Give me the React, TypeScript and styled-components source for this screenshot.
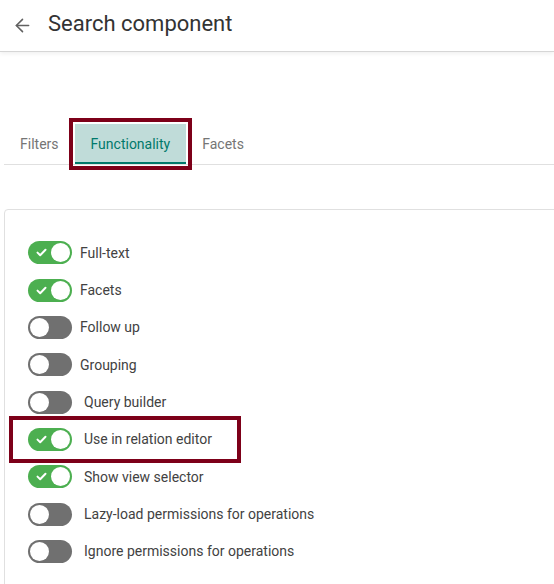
import React from 'react'
import styled, { createGlobalStyle } from 'styled-components'
import { ArrowLeft } from 'lucide-react'

const Global = createGlobalStyle`
  html, body {
    margin: 0;
    padding: 0;
    background: #fff;
    overflow: hidden;
  }
  body {
    font-family: Roboto, 'Liberation Sans', sans-serif;
    color: #424242;
  }
`

const Page = styled.div`
  width: 554px;
  height: 584px;
  overflow: hidden;
`

const Header = styled.header`
  height: 52px;
  display: flex;
  align-items: center;
  gap: 15px;
  padding-left: 12px;
  box-sizing: border-box;
  border-bottom: 1px solid #d6d6d6;
  box-shadow: 0 2px 4px rgba(0, 0, 0, 0.06);

  svg {
    color: #616161;
  }
`

const Title = styled.h1`
  margin: 0 0 5px;
  font-size: 22px;
  font-weight: 400;
  color: #333;
`

const TabBar = styled.nav`
  margin: 72px 0 0 4px;
  display: flex;
  border-bottom: 1px solid #e0e0e0;
`

const Tab = styled.button<{ $active?: boolean }>`
  height: 40px;
  padding: 2px 16px 0;
  border: none;
  font-family: inherit;
  font-size: 14px;
  cursor: pointer;
  color: ${p => (p.$active ? '#00796b' : '#757575')};
  background: ${p => (p.$active ? '#c0dcd9' : 'transparent')};
  border-bottom: 2px solid ${p => (p.$active ? '#00796b' : 'transparent')};
  outline: ${p => (p.$active ? '4px solid #7d0019' : 'none')};
  outline-offset: 2px;
`

const Card = styled.section`
  margin: 44px 0 0 4px;
  width: 620px;
  height: 420px;
  border: 1px solid #e0e0e0;
  border-radius: 4px;
  padding: 24px 0 0 23px;
`

const Row = styled.label<{ $marked?: boolean }>`
  height: 37.35px;
  display: flex;
  align-items: center;
  gap: ${p => (p.$marked ? '12px' : '8px')};
  font-size: 14px;
  width: ${p => (p.$marked ? '222px' : 'auto')};
  margin-left: ${p => (p.$marked ? '-14px' : '0')};
  padding-left: ${p => (p.$marked ? '14px' : '0')};
  outline: ${p => (p.$marked ? '4px solid #7d0019' : 'none')};
  outline-offset: 1px;
  box-sizing: border-box;
`

const Label = styled.span<{ $shift?: boolean }>`
  margin-left: ${p => (p.$shift ? '4px' : '0')};
`

const Track = styled.span<{ $on: boolean }>`
  position: relative;
  flex: none;
  width: 44px;
  height: 23px;
  border-radius: 12px;
  background: ${p => (p.$on ? '#4caf50' : '#707070')};
  display: flex;
  align-items: center;
  padding: 0 2px;
  box-sizing: border-box;
  justify-content: ${p => (p.$on ? 'flex-end' : 'flex-start')};

  svg {
    position: absolute;
    left: 8px;
    top: 7px;
  }
`

const Knob = styled.span`
  width: 19px;
  height: 19px;
  border-radius: 50%;
  background: #fff;
`

const Check = () => (
  <svg width="11" height="9" viewBox="0 0 11 9">
    <path d="M1.5 4.6 L4.2 7.2 L9.5 1.8" fill="none" stroke="#fff" strokeWidth="2" strokeLinecap="round" strokeLinejoin="round" />
  </svg>
)

const Toggle = ({ on }: { on: boolean }) => (
  <Track $on={on}>
    {on && <Check />}
    <Knob />
  </Track>
)

const options = [
  { label: 'Full-text', on: true },
  { label: 'Facets', on: true },
  { label: 'Follow up', on: false },
  { label: 'Grouping', on: false },
  { label: 'Query builder', on: false, shift: true },
  { label: 'Use in relation editor', on: true, shift: true, marked: true },
  { label: 'Show view selector', on: true, shift: true },
  { label: 'Lazy-load permissions for operations', on: false, shift: true },
  { label: 'Ignore permissions for operations', on: false, shift: true },
]

function App() {
  return (
    <Page>
      <Global />
      <Header>
        <ArrowLeft size={21} strokeWidth={1.8} />
        <Title>Search component</Title>
      </Header>
      <TabBar>
        <Tab>Filters</Tab>
        <Tab $active>Functionality</Tab>
        <Tab>Facets</Tab>
      </TabBar>
      <Card>
        {options.map(o => (
          <Row key={o.label} $marked={o.marked}>
            <Toggle on={o.on} />
            <Label $shift={o.shift && !o.marked}>{o.label}</Label>
          </Row>
        ))}
      </Card>
    </Page>
  )
}

export default App
